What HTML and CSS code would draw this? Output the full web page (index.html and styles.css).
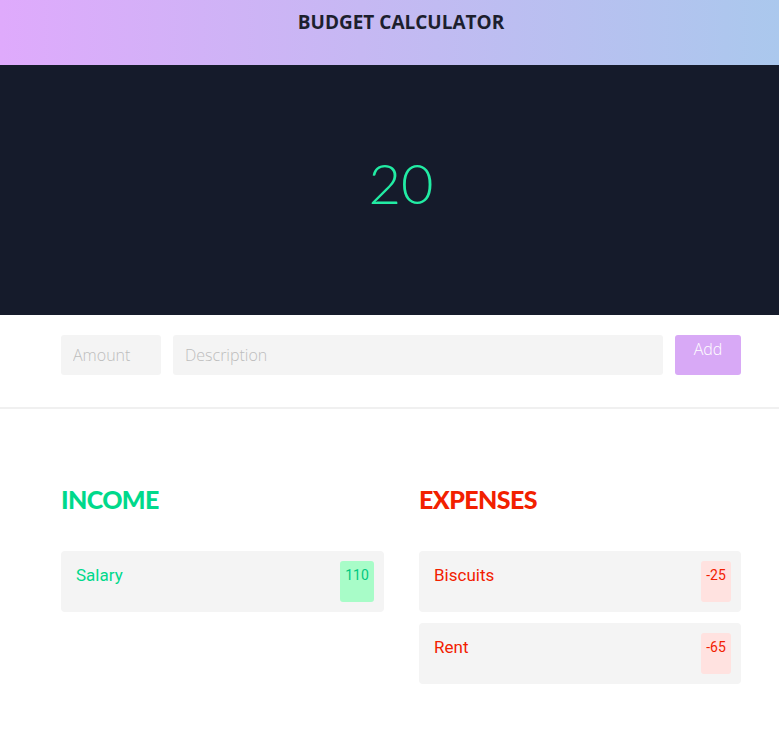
FILE: index.html
```html
<!DOCTYPE html>
<html>
<head>
<meta charset="utf-8">
<link rel="stylesheet" href="styles.css">
</head>
<body>
<div class="page">
  <header class="topbar">
    <h1 class="title">BUDGET CALCULATOR</h1>
  </header>
  <section class="balance">
    <div class="total">20</div>
  </section>
  <section class="entry">
    <div class="entry-row">
      <input class="field amount" type="text" placeholder="Amount">
      <input class="field desc" type="text" placeholder="Description">
      <button class="add-btn">Add</button>
    </div>
  </section>
  <section class="lists">
    <div class="column">
      <h2 class="heading income">INCOME</h2>
      <div class="item income-item">
        <span class="label">Salary</span>
        <span class="badge income-badge">110</span>
      </div>
    </div>
    <div class="column">
      <h2 class="heading expense">EXPENSES</h2>
      <div class="item expense-item">
        <span class="label">Biscuits</span>
        <span class="badge expense-badge">-25</span>
      </div>
      <div class="item expense-item">
        <span class="label">Rent</span>
        <span class="badge expense-badge">-65</span>
      </div>
    </div>
  </section>
</div>
</body>
</html>
```
FILE: styles.css
```css
html, body {
  margin: 0;
  padding: 0;
  overflow-x: hidden;
  background: #ffffff;
}
.page {
  width: 802px;
}
.topbar {
  height: 65px;
  background: linear-gradient(90deg, #dfaafc 0%, #c6b8f3 45%, #a9c9ed 100%);
  display: flex;
  justify-content: center;
}
.title {
  margin: 0;
  padding-top: 10px;
  font-family: "Open Sans", sans-serif;
  font-weight: 700;
  font-size: 19px;
  letter-spacing: 0;
  color: #1d1f2e;
  height: 24px;
  line-height: 24px;
}
.balance {
  height: 250px;
  background: #151b2b;
  display: flex;
  justify-content: center;
  align-items: center;
}
.total {
  font-family: "Lato", sans-serif;
  font-weight: 300;
  font-size: 56px;
  color: #22eca4;
  margin-top: -16px;
}
.entry {
  border-bottom: 2px solid #f0f0f0;
  padding: 20px 0 32px;
}
.entry-row {
  width: 680px;
  margin: 0 auto;
  display: flex;
  gap: 12px;
}
.field {
  height: 40px;
  box-sizing: border-box;
  border: none;
  border-radius: 3px;
  background: #f4f4f4;
  padding: 0 12px;
  font-family: "Open Sans", sans-serif;
  font-weight: 300;
  font-size: 16px;
  color: #555;
  outline: none;
}
.field::placeholder {
  color: #bdbdbd;
}
.amount {
  width: 100px;
}
.desc {
  flex: 1;
}
.add-btn {
  width: 66px;
  height: 40px;
  border: none;
  border-radius: 3px;
  background: #d8a9f6;
  color: #ffffff;
  font-family: "Open Sans", sans-serif;
  font-weight: 300;
  font-size: 16px;
  padding: 3px 0 0;
  display: flex;
  justify-content: center;
  align-items: flex-start;
}
.lists {
  width: 680px;
  margin: 0 auto;
  display: grid;
  grid-template-columns: 323px 322px;
  column-gap: 35px;
  padding-top: 75px;
}
.heading {
  margin: 0 0 37px;
  font-family: "Lato", sans-serif;
  font-weight: 900;
  font-size: 25px;
  line-height: 30px;
  letter-spacing: -0.6px;
}
.income {
  color: #00d98b;
}
.expense {
  color: #f22000;
}
.item {
  background: #f4f4f4;
  border-radius: 4px;
  height: 61px;
  box-sizing: border-box;
  padding: 10px 10px 10px 15px;
  display: flex;
  justify-content: space-between;
  margin-bottom: 11px;
}
.label {
  font-family: "Roboto", sans-serif;
  font-size: 17px;
  padding-top: 4px;
}
.income-item .label {
  color: #00d98b;
}
.expense-item .label {
  color: #f22000;
}
.badge {
  height: 41px;
  box-sizing: border-box;
  border-radius: 3px;
  padding: 6px 5px 0;
  font-family: "Roboto", sans-serif;
  font-size: 14px;
  min-width: 34px;
  text-align: center;
}
.income-badge {
  background: #a8fcc8;
  color: #00c87f;
}
.expense-badge {
  background: #ffe2e0;
  color: #f22000;
  min-width: 30px;
  padding: 6px 2px 0;
}
```
